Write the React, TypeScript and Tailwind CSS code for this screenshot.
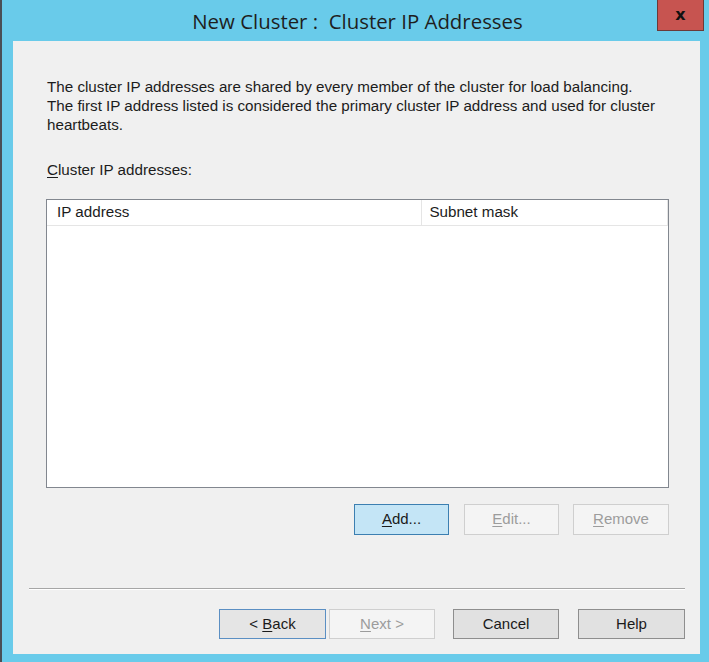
const Btn = ({
    children,
    kind = 'normal',
    className = '',
}: {
    children: React.ReactNode
    kind?: 'normal' | 'default' | 'disabled' | 'focus'
    className?: string
}) => {
    const look =
        kind === 'default'
            ? 'border-[#3c7fb1] bg-[#c4e5f6] text-[#1a1a1a]'
            : kind === 'focus'
              ? 'border-[#5b8fc3] bg-[#e5e5e5] text-[#1a1a1a]'
              : kind === 'disabled'
                ? 'border-[#cfcfcf] bg-[#f4f4f4] text-[#9c9c9c]'
                : 'border-[#8e8e8e] bg-[#e1e1e1] text-[#1a1a1a]'
    return (
        <div className={`flex items-center justify-center border text-[15px] ${look} ${className}`}>
            {children}
        </div>
    )
}

const App = () => {
    return (
        <div className="flex h-[662px] w-[709px] flex-col border-l-2 border-[#4a4f55] bg-[#69cbea] font-['Liberation_Sans',sans-serif] text-[#1c1c1c]">
            {/* title bar */}
            <div className="relative flex h-[41px] items-center justify-center">
                <span className="ml-[4px] mt-[1px] font-['Open_Sans',sans-serif] text-[20.4px] text-[#1e1e1e]">
                    New Cluster :&nbsp; Cluster IP Addresses
                </span>
                <div className="absolute top-0 right-[5px] flex h-[31px] w-[47px] items-center justify-center border border-t-0 border-[#6b3a38] bg-[#c75450]">
                    <span className="font-['DejaVu_Sans',sans-serif] text-[16px] font-bold text-[#111]">x</span>
                </div>
            </div>

            {/* client area */}
            <div className="ml-[11px] mr-[9px] flex h-[613px] flex-col bg-[#f0f0f0] text-[15.2px]">
                <div className="mt-[36px] pl-[34px] leading-[19px]">
                    <div>The cluster IP addresses are shared by every member of the cluster for load balancing.</div>
                    <div>The first IP address listed is considered the primary cluster IP address and used for cluster</div>
                    <div>heartbeats.</div>
                </div>
                <div className="mt-[26px] pl-[34px] leading-[19px]">
                    <span className="underline underline-offset-2">C</span>luster IP addresses:
                </div>

                {/* list view */}
                <div className="mt-[20px] ml-[33px] flex h-[289px] w-[623px] flex-col border border-[#82878f] bg-white">
                    <div className="flex h-[26px] border-b border-[#e5e5e5]">
                        <div className="flex w-[376px] items-center border-r border-[#e5e5e5] pl-[10px]">IP address</div>
                        <div className="flex w-[246px] items-center border-r border-[#e5e5e5] pl-[7px]">Subnet mask</div>
                    </div>
                </div>

                <div className="mt-[16px] ml-[341px] flex gap-[14px]">
                    <Btn kind="default" className="h-[31px] w-[95px]">
                        <span><span className="underline underline-offset-2">A</span>dd...</span>
                    </Btn>
                    <Btn kind="disabled" className="ml-[1px] h-[31px] w-[95px]">
                        <span><span className="underline underline-offset-2">E</span>dit...</span>
                    </Btn>
                    <Btn kind="disabled" className="h-[31px] w-[96px]">
                        <span><span className="underline underline-offset-2">R</span>emove</span>
                    </Btn>
                </div>

                <div className="mt-[53px] ml-[16px] w-[656px] border-t border-b border-t-[#a6a6a6] border-b-white" />

                <div className="mt-[19px] ml-[206px] flex">
                    <Btn kind="focus" className="h-[30px] w-[107px]">
                        <span>&lt; <span className="underline underline-offset-2">B</span>ack</span>
                    </Btn>
                    <Btn kind="disabled" className="ml-[3px] h-[30px] w-[106px]">
                        <span><span className="underline underline-offset-2">N</span>ext &gt;</span>
                    </Btn>
                    <Btn className="ml-[18px] h-[30px] w-[106px]">Cancel</Btn>
                    <Btn className="ml-[19px] h-[30px] w-[107px]">Help</Btn>
                </div>
            </div>
        </div>
    )
}

export default App
